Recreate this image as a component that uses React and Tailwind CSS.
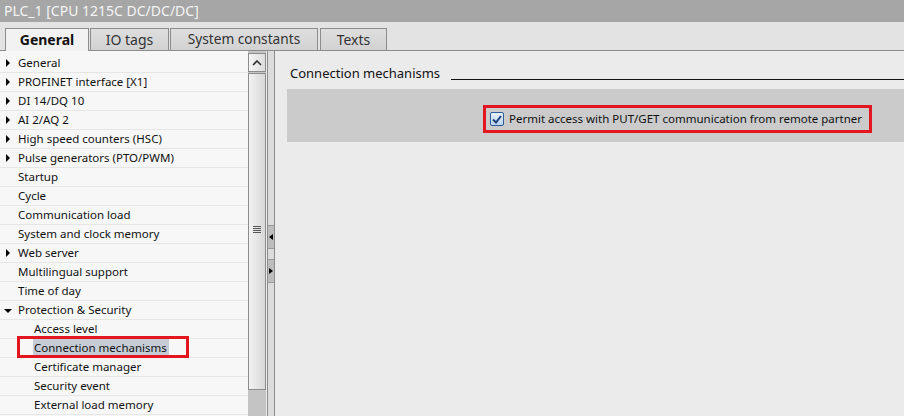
import React from "react";

const items = [
  { t: "General", a: "r", l: 0 },
  { t: "PROFINET interface [X1]", a: "r", l: 0 },
  { t: "DI 14/DQ 10", a: "r", l: 0 },
  { t: "AI 2/AQ 2", a: "r", l: 0 },
  { t: "High speed counters (HSC)", a: "r", l: 0 },
  { t: "Pulse generators (PTO/PWM)", a: "r", l: 0 },
  { t: "Startup", l: 0 },
  { t: "Cycle", l: 0 },
  { t: "Communication load", l: 0 },
  { t: "System and clock memory", l: 0 },
  { t: "Web server", a: "r", l: 0 },
  { t: "Multilingual support", l: 0 },
  { t: "Time of day", l: 0 },
  { t: "Protection & Security", a: "d", l: 0 },
  { t: "Access level", l: 1 },
  { t: "Connection mechanisms", l: 1, sel: true },
  { t: "Certificate manager", l: 1 },
  { t: "Security event", l: 1 },
  { t: "External load memory", l: 1 },
];

function Arrow({ dir }) {
  if (dir === "d")
    return (
      <svg width="8" height="8" viewBox="0 0 8 8" className="absolute left-[4px] top-[6px]">
        <path d="M0 2 L8 2 L4 6 Z" fill="#000" />
      </svg>
    );
  return (
    <svg width="8" height="8" viewBox="0 0 8 8" className="absolute left-[5px] top-[5px]">
      <path d="M1 0 L5 4 L1 8 Z" fill="#000" />
    </svg>
  );
}

export default function App() {
  return (
    <div
      className="w-[904px] h-[416px] overflow-hidden bg-[#ebebeb] flex flex-col"
      style={{ fontFamily: '"Noto Sans", "Open Sans", sans-serif' }}
    >
      <div className="h-[22px] bg-[#a6a6a6] text-[#f4f4f4] text-[14px] leading-[22px] pl-[4px] shrink-0">
        PLC_1 [CPU 1215C DC/DC/DC]
      </div>
      <div className="h-[29px] bg-[#e3e3e3] shrink-0 relative flex items-end pl-[5px] border-b border-[#8c8c8c]">
        <div className="h-[23px] w-[84px] bg-[#f2f2f2] border border-b-0 border-[#8c8c8c] text-[14px] font-bold text-[#111] flex items-center justify-center -mb-px relative z-10 pb-px">
          General
        </div>
        <div className="h-[22px] w-[79px] bg-gradient-to-b from-[#dedede] to-[#d2d2d2] border border-b-0 border-[#8c8c8c] text-[14px] text-[#333] flex items-center justify-center ml-[1px]">
          IO tags
        </div>
        <div className="h-[22px] w-[148px] bg-gradient-to-b from-[#dedede] to-[#d2d2d2] border border-b-0 border-[#8c8c8c] text-[13.7px] text-[#333] flex items-center justify-center ml-[1px]">
          System constants
        </div>
        <div className="h-[22px] w-[67px] bg-gradient-to-b from-[#dedede] to-[#d2d2d2] border border-b-0 border-[#8c8c8c] text-[14px] text-[#333] flex items-center justify-center ml-[2px]">
          Texts
        </div>
      </div>
      <div className="flex flex-1 min-h-0">
        <div className="w-[248px] shrink-0 bg-[#f7f7f7] pt-[3px]">
          {items.map((it, i) => (
            <div
              key={i}
              className="relative h-[19px] border-b border-[#e6e6e6] text-[11.5px] leading-[18px] text-[#111]"
            >
              {it.a && <Arrow dir={it.a} />}
              <span
                className={
                  "absolute top-0 whitespace-nowrap " +
                  (it.l ? "left-[34px]" : "left-[18px]") +
                  (it.sel ? " bg-[#c5ccd6] pr-[2px] -ml-[1px] pl-[1px]" : "")
                }
              >
                {it.t}
              </span>
              {it.sel && (
                <div className="absolute left-[17px] top-[-3px] w-[172px] h-[22px] border-[3px] border-[#e3161f]" />
              )}
            </div>
          ))}
        </div>
        <div className="w-[18px] shrink-0 bg-[#c4c4c4] flex flex-col pt-[2px]">
          <div className="h-[19px] border border-[#8c8c8c] bg-gradient-to-r from-[#f6f6f6] to-[#dcdcdc] flex items-center justify-center">
            <svg width="10" height="6" viewBox="0 0 10 6">
              <path d="M1 5 L5 1 L9 5" stroke="#333" strokeWidth="1.6" fill="none" />
            </svg>
          </div>
          <div className="h-[317px] mt-[1px] border border-[#8c8c8c] bg-gradient-to-r from-[#f2f2f2] to-[#d8d8d8] flex items-center justify-center">
            <div className="flex flex-col gap-[1px] mb-[4px]">
              <div className="w-[8px] h-px bg-[#555]" />
              <div className="w-[8px] h-px bg-[#555]" />
              <div className="w-[8px] h-px bg-[#555]" />
              <div className="w-[8px] h-px bg-[#555]" />
            </div>
          </div>
        </div>
        <div className="w-[1px] shrink-0 bg-[#ebebeb]" />
        <div className="w-[8px] shrink-0 bg-[#dcdcdc] border-x border-[#8c8c8c] flex flex-col pt-[174px]">
          <div className="h-[24px] bg-[#bdbdbd] border-y border-[#9a9a9a] flex items-center justify-center">
            <svg width="4" height="6" viewBox="0 0 4 6"><path d="M4 0 L0 3 L4 6 Z" fill="#000" /></svg>
          </div>
          <div className="h-[10px]" />
          <div className="h-[24px] bg-[#bdbdbd] border-y border-[#9a9a9a] flex items-center justify-center">
            <svg width="4" height="6" viewBox="0 0 4 6"><path d="M0 0 L4 3 L0 6 Z" fill="#000" /></svg>
          </div>
        </div>
        <div className="flex-1 bg-[#ebebeb] pl-[12px] pt-[14px]">
          <div className="flex items-end h-[17px] pl-[3px]">
            <span className="text-[13px] text-[#111] leading-[17px] whitespace-nowrap">Connection mechanisms</span>
            <div className="flex-1 ml-[11px] mb-[2px] border-b border-[#111]" />
          </div>
          <div className="mt-[7px] h-[53px] bg-[#cbcbcb] pl-[196px] pt-[16px]">
            <div className="inline-flex items-center h-[28px] border-[3px] border-[#e3161f] pl-[4px] pr-[7px]">
              <div className="w-[14px] h-[14px] rounded-[2px] border border-[#2b5d9a] bg-gradient-to-b from-[#e6f0fb] to-[#bcd4ee] flex items-center justify-center">
                <svg width="10" height="9" viewBox="0 0 10 9">
                  <path d="M1 4.5 L4 7.5 L9 1" stroke="#1a3f7a" strokeWidth="2" fill="none" />
                </svg>
              </div>
              <span className="ml-[5px] text-[11.5px] text-[#111] whitespace-nowrap">
                Permit access with PUT/GET communication from remote partner
              </span>
            </div>
          </div>
        </div>
      </div>
    </div>
  );
}
